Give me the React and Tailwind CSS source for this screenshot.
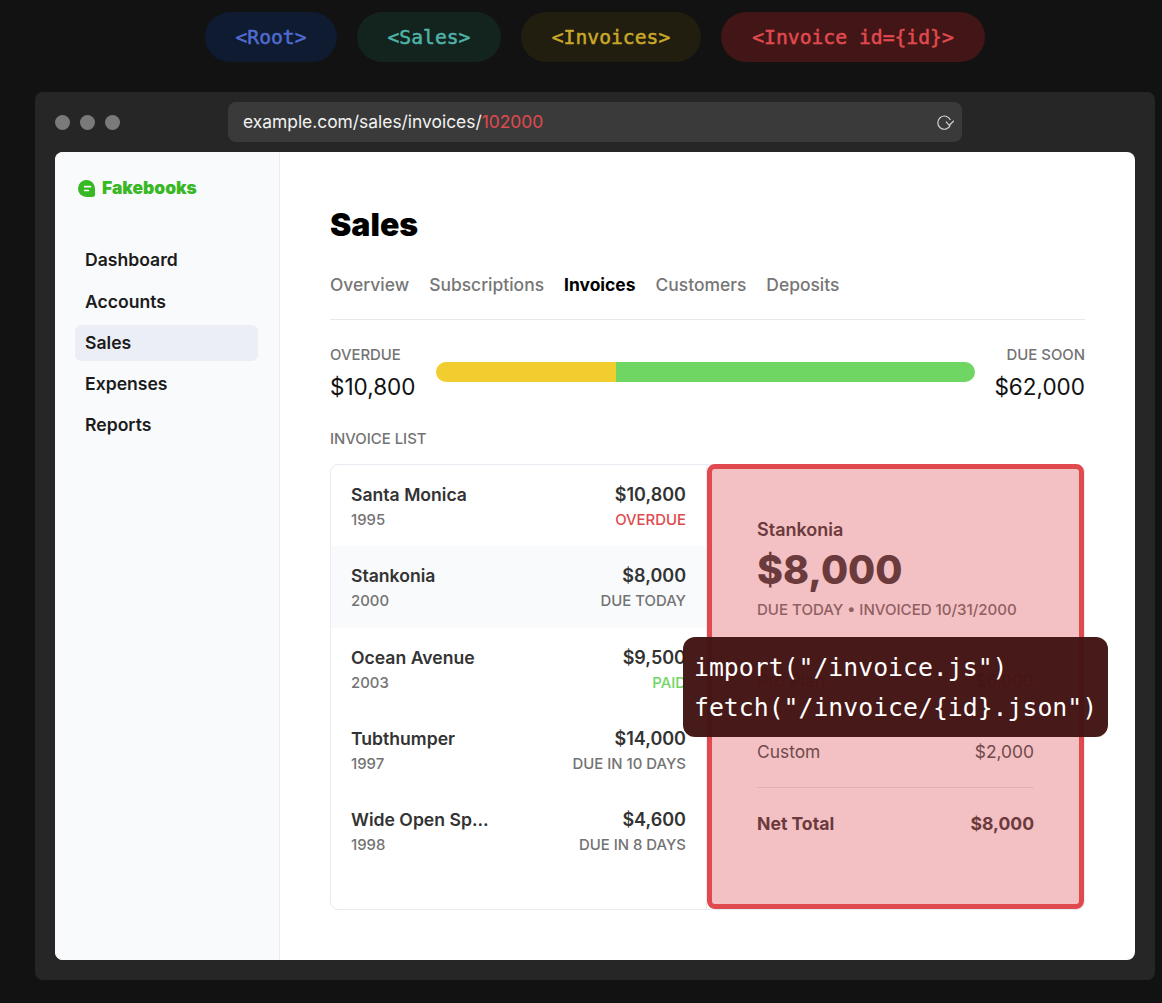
import React from 'react';

const MONO = "font-['DejaVu_Sans_Mono',monospace]";

const ROUTES = [
  { label: '<Root>', cls: 'w-[132px] bg-[#0f1b31] text-[#4f6bd0]' },
  { label: '<Sales>', cls: 'w-[144px] bg-[#13241f] text-[#4fb3a8]' },
  { label: '<Invoices>', cls: 'w-[180px] bg-[#211d0f] text-[#c9a82a]' },
  { label: '<Invoice id={id}>', cls: 'w-[264px] bg-[#421616] text-[#e04a4f]' },
];

const NAV = ['Dashboard', 'Accounts', 'Sales', 'Expenses', 'Reports'];
const TABS = ['Overview', 'Subscriptions', 'Invoices', 'Customers', 'Deposits'];

const INVOICES = [
  { name: 'Santa Monica', year: '1995', amount: '$10,800', status: 'OVERDUE', color: 'text-[#e04a4f]' },
  { name: 'Stankonia', year: '2000', amount: '$8,000', status: 'DUE TODAY', color: 'text-[#737373]', active: true },
  { name: 'Ocean Avenue', year: '2003', amount: '$9,500', status: 'PAID', color: 'text-[#6fd663]' },
  { name: 'Tubthumper', year: '1997', amount: '$14,000', status: 'DUE IN 10 DAYS', color: 'text-[#737373]' },
  { name: 'Wide Open Sp...', year: '1998', amount: '$4,600', status: 'DUE IN 8 DAYS', color: 'text-[#737373]' },
];

const Logo = () => (
  <svg width="17" height="17" viewBox="0.5 0.5 16 16">
    <path d="M8.5 0.5a8 8 0 0 1 8 8v5.5a2.5 2.5 0 0 1-2.5 2.5H8.5a8 8 0 0 1 0-16z" fill="#37b824" />
    <rect x="6" y="6" width="7" height="1.6" rx="0.8" fill="#f9fafb" />
    <rect x="6" y="9.6" width="5" height="1.6" rx="0.8" fill="#f9fafb" />
  </svg>
);

const App = () => {
  return (
    <div className="relative h-[1003px] overflow-hidden bg-[#121212] font-['Inter',sans-serif]">
      <div className="flex h-[92px] gap-5 pt-3 pl-[205px]">
        {ROUTES.map(r => (
          <div key={r.label} className={`flex h-[50px] items-center justify-center rounded-[25px] pt-[2px] text-[19.7px] font-medium [-webkit-text-stroke:0.5px_currentColor] ${MONO} ${r.cls}`}>
            {r.label}
          </div>
        ))}
      </div>

      <div className="mx-[35px] h-[888px] w-[1120px] rounded-lg bg-[#262626] px-5">
        <div className="flex h-[60px] items-center">
          <div className="flex w-[173px] gap-[10px]">
            <span className="h-[15px] w-[15px] rounded-full bg-[#7a7a7a]" />
            <span className="h-[15px] w-[15px] rounded-full bg-[#7a7a7a]" />
            <span className="h-[15px] w-[15px] rounded-full bg-[#7a7a7a]" />
          </div>
          <div className="flex h-10 w-[734px] items-center justify-between rounded-lg bg-[#3a3a3a] pr-[8px] pl-[15px] text-[17.4px] text-[#f2f2f2]">
            <span>example.com/sales/invoices/<span className="text-[#e04a4f]">102000</span></span>
            <svg width="18" height="18" viewBox="0 0 18 18" fill="none" stroke="#d4d4d4" strokeWidth="1.2">
              <path d="M14.4 6.9A6.6 6.6 0 1 0 14.3 12.6" />
              <path d="M10 8.7l3.3 3.6L18 7.7" />
            </svg>
          </div>
        </div>

        <div className="flex h-[808px] overflow-hidden rounded-lg bg-white">
          <div className="w-[225px] border-r border-[#e9ebf2] bg-[#f9fafc] pt-[26px] pr-[21px] pl-5">
            <div className="flex h-5 items-center gap-[7px] pl-[3px] text-[17.4px] font-black text-[#37b824]">
              <Logo />
              <span>Fakebooks</span>
            </div>
            <div className="mt-[44px] flex flex-col gap-[5px]">
              {NAV.map(n => (
                <div key={n} className={`flex h-9 items-center rounded-md px-[10px] text-[17.6px] font-semibold text-[#1c1c1c] first:mb-[1px] ${n === 'Sales' ? 'bg-[#eceef6]' : ''}`}>
                  {n}
                </div>
              ))}
            </div>
          </div>

          <div className="relative flex-1 px-[50px] pt-[51px]">
            <h1 className="text-[32px] leading-[44px] font-black text-black">Sales</h1>
            <div className="mt-[19px] flex h-[54px] gap-5 border-b border-[#e8e8e8] pt-[6px] text-[17.45px] leading-[26px] font-medium text-[#767676]">
              {TABS.map(t => (
                <span key={t} className={t === 'Invoices' ? 'font-bold text-black' : ''}>{t}</span>
              ))}
            </div>

            <div className="mt-[24px] flex items-start">
              <div className="w-[106px]">
                <div className="text-[14.9px] leading-[22px] font-medium text-[#737373]">OVERDUE</div>
                <div className="mt-[10px] text-[22.5px] leading-[22px] text-[#111]">$10,800</div>
              </div>
              <div className="mt-[18px] flex h-5 w-[539px] overflow-hidden rounded-[10px]">
                <div className="w-[180px] bg-[#f1cd30]" />
                <div className="flex-1 bg-[#6fd663]" />
              </div>
              <div className="flex-1 text-right">
                <div className="text-[14.9px] leading-[22px] font-medium text-[#737373]">DUE SOON</div>
                <div className="mt-[10px] text-[22.5px] leading-[22px] text-[#111]">$62,000</div>
              </div>
            </div>

            <div className="mt-[30px] text-[14.9px] leading-[22px] font-medium text-[#737373]">INVOICE LIST</div>

            <div className="mt-[14px] flex h-[446px] rounded-lg border border-[#e9ebf2]">
              <div className="w-[376px] border-r border-[#e9ebf2]">
                {INVOICES.map(inv => (
                  <div key={inv.name} className={`flex h-[81.25px] justify-between px-5 pt-[17px] ${inv.active ? 'bg-[#f9fafc]' : ''}`}>
                    <div>
                      <div className="text-[17.6px] leading-[26px] font-semibold text-[#333]">{inv.name}</div>
                      <div className="text-[14.9px] leading-[24px] font-medium text-[#737373]">{inv.year}</div>
                    </div>
                    <div className="text-right">
                      <div className="text-[18px] leading-[26px] font-semibold text-[#333]">{inv.amount}</div>
                      <div className={`text-[14.9px] leading-[24px] font-medium ${inv.color}`}>{inv.status}</div>
                    </div>
                  </div>
                ))}
              </div>
              <div className="-mt-px flex-1 rounded-lg border-[5px] border-[#e04a4f] bg-[#f3c0c3] px-[45px] pt-[48px] text-[#6f4a4d]">
                <div className="text-[18px] leading-[26px] font-semibold text-[#6b3a3c]">Stankonia</div>
                <div className="text-[39.3px] leading-[54px] font-extrabold text-[#6b3a3c]">$8,000</div>
                <div className="mt-[2px] text-[15.05px] leading-[22px] font-medium text-[#8f5f62]">DUE TODAY • INVOICED 10/31/2000</div>
                <div className="mt-[25px] flex h-[71px] items-center justify-between border-b border-[#e4b0b3] text-[17.4px]">
                  <span>Pro Plan</span><span>$6,000</span>
                </div>
                <div className="flex h-[71px] items-center justify-between border-b border-[#e4b0b3] text-[17.4px]">
                  <span>Custom</span><span>$2,000</span>
                </div>
                <div className="flex h-[71px] items-center justify-between pt-[2px] text-[17.6px] font-bold text-[#6b3a3c]">
                  <span>Net Total</span><span>$8,000</span>
                </div>
              </div>
            </div>
          </div>
        </div>
      </div>

      <div className={`absolute top-[637px] left-[683px] flex h-[100px] w-[425px] flex-col justify-center rounded-xl bg-[#421414]/[.97] pt-[2px] pl-[11px] text-[24.8px] leading-[40px] text-white ${MONO}`}>
        <div>import("/invoice.js")</div>
        <div>fetch("/invoice/{'{id}'}.json")</div>
      </div>
    </div>
  );
};

export default App;
